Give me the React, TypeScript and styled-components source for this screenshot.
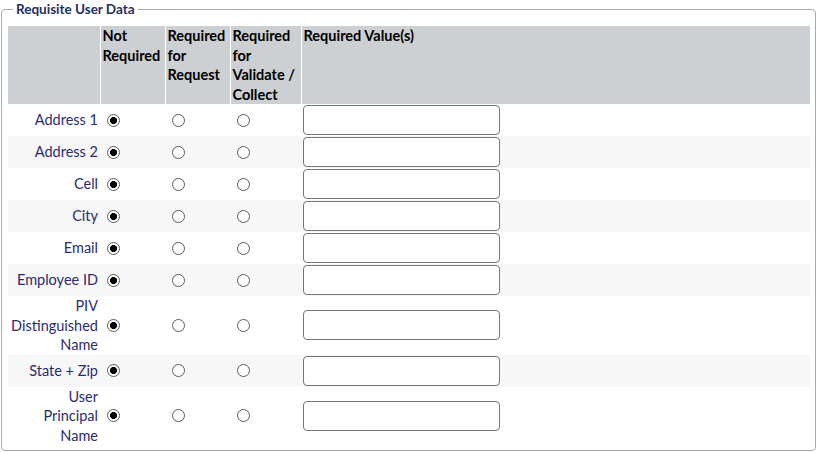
import React from "react";
import styled, { createGlobalStyle } from "styled-components";

const GlobalStyle = createGlobalStyle`
  body {
    margin: 0;
    background: #ffffff;
    font-family: Lato, "Open Sans", sans-serif;
  }
`;

const Fieldset = styled.fieldset`
  margin: 0 1px;
  padding: 0 5px 5px 6px;
  border: 1px solid #a9a9a9;
  border-radius: 4px;
  box-sizing: border-box;
`;

const Legend = styled.legend`
  margin-left: 5px;
  padding: 0 3px;
  font-size: 13.5px;
  font-weight: 700;
  color: #1f2f60;
  line-height: 18px;
`;

const Table = styled.table`
  width: 100%;
  border-collapse: collapse;
  margin-top: 8px;
  font-size: 14.5px;
`;

const HeadCell = styled.th<{ $width?: number }>`
  background: #ccd0d3;
  color: #000;
  font-weight: 700;
  text-align: left;
  vertical-align: top;
  padding: 0 2px;
  line-height: 19.5px;
  height: 78px;
  box-sizing: border-box;
  border-left: 1px solid #ffffff;
  width: ${({ $width }) => ($width ? `${$width}px` : "auto")};
  &:first-child {
    border-left: none;
  }
`;

const Row = styled.tr<{ $shade: boolean }>`
  background: ${({ $shade }) => ($shade ? "#f7f7f7" : "#ffffff")};
`;

const LabelCell = styled.td`
  text-align: right;
  color: #2b2d6b;
  padding: 0 2px;
  line-height: 19.5px;
  height: 32px;
`;

const RadioCell = styled.td`
  padding: 0 2px;
  vertical-align: middle;
`;

const ValueCell = styled.td`
  padding: 1px 2px;
  vertical-align: middle;
`;

const Radio = styled.input.attrs({ type: "radio" })`
  appearance: none;
  display: block;
  width: 13px;
  height: 13px;
  margin: 0 0 0 5px;
  border: 1px solid #5a5a5a;
  border-radius: 50%;
  box-sizing: border-box;
  background: #ffffff;
  &:checked {
    background: radial-gradient(circle, #000 0 3.3px, #fff 3.8px);
  }
`;

const ValueInput = styled.input`
  display: block;
  width: 197px;
  height: 30px;
  box-sizing: border-box;
  border: 1px solid #767676;
  border-radius: 4px;
  background: #fff;
  margin: 0;
`;

const fields = [
  "Address 1",
  "Address 2",
  "Cell",
  "City",
  "Email",
  "Employee ID",
  "PIV Distinguished Name",
  "State + Zip",
  "User Principal Name",
];

const wrapLabel = (label: string) => {
  if (label === "PIV Distinguished Name")
    return (
      <>
        PIV
        <br />
        Distinguished
        <br />
        Name
      </>
    );
  if (label === "User Principal Name")
    return (
      <>
        User
        <br />
        Principal
        <br />
        Name
      </>
    );
  return label;
};

export default function App() {
  return (
    <>
      <GlobalStyle />
      <Fieldset>
        <Legend>Requisite User Data</Legend>
        <Table>
          <thead>
            <tr>
              <HeadCell $width={92}></HeadCell>
              <HeadCell $width={65}>
                Not
                <br />
                Required
              </HeadCell>
              <HeadCell $width={65}>
                Required
                <br />
                for
                <br />
                Request
              </HeadCell>
              <HeadCell $width={71}>
                Required
                <br />
                for
                <br />
                Validate /
                <br />
                Collect
              </HeadCell>
              <HeadCell>Required Value(s)</HeadCell>
            </tr>
          </thead>
          <tbody>
            {fields.map((f, i) => (
              <Row key={f} $shade={i % 2 === 1}>
                <LabelCell>{wrapLabel(f)}</LabelCell>
                <RadioCell>
                  <Radio name={`r${i}`} defaultChecked />
                </RadioCell>
                <RadioCell>
                  <Radio name={`r${i}`} />
                </RadioCell>
                <RadioCell>
                  <Radio name={`r${i}`} />
                </RadioCell>
                <ValueCell>
                  <ValueInput type="text" />
                </ValueCell>
              </Row>
            ))}
          </tbody>
        </Table>
      </Fieldset>
    </>
  );
}
